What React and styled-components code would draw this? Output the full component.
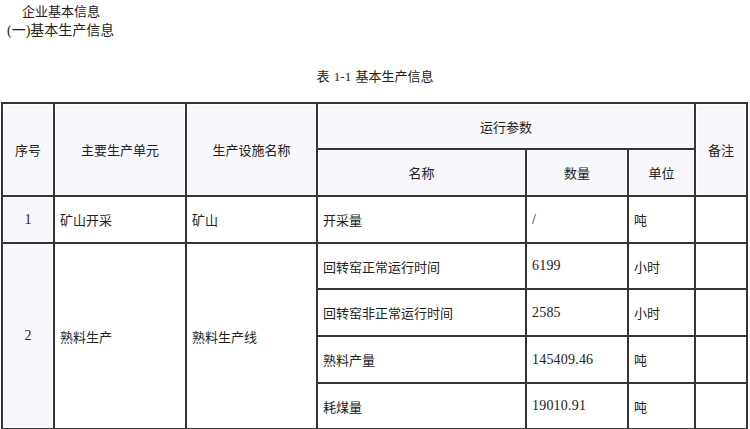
import React from "react";
import styled, { createGlobalStyle } from "styled-components";

const Global = createGlobalStyle`
  html, body { margin: 0; padding: 0; background: #fff; }
  body {
    font-family: "Liberation Serif", "Noto Sans CJK SC", serif;
    color: #222;
  }
`;

const Page = styled.div`
  width: 750px;
  height: 429px;
  overflow: hidden;
  display: flex;
  flex-direction: column;
`;

const SectionTitle = styled.div`
  padding-left: ${(p) => p.$indent}px;
  font-size: ${(p) => p.$size}px;
  line-height: ${(p) => p.$line}px;
  margin-top: ${(p) => p.$top}px;
`;

const Caption = styled.div`
  text-align: center;
  font-size: 13px;
  line-height: 16px;
  margin-top: 29px;
  word-spacing: 1px;
`;

const Table = styled.table`
  margin-top: 17px;
  margin-left: 1px;
  width: 745px;
  border-collapse: collapse;
  table-layout: fixed;
  font-size: 13px;
`;

const Cell = styled.td`
  border: 2px solid #353535;
  padding: 0 5px;
  height: ${(p) => p.$h || 46}px;
  box-sizing: border-box;
  text-align: ${(p) => (p.$center ? "center" : "left")};
  vertical-align: middle;
  background: ${(p) => (p.$tint ? "#f7f7fc" : "#fff")};
  box-shadow: inset 0 0 0 1px #fff;
  white-space: nowrap;
`;

const Head = styled(Cell).attrs({ as: "th" })`
  font-weight: normal;
  text-align: center;
  background: #f7f7fc;
`;

const Num = styled.span`
  font-size: 14px;
  letter-spacing: 0.2px;
`;

const widths = [52, 132, 131, 209, 102, 67, 52];

const rows2 = [
  ["回转窑正常运行时间", "6199", "小时"],
  ["回转窑非正常运行时间", "2585", "小时"],
  ["熟料产量", "145409.46", "吨"],
  ["耗煤量", "19010.91", "吨"],
];

export default function App() {
  return (
    <Page>
      <Global />
      <SectionTitle $indent={22} $size={13} $line={16} $top={4}>
        企业基本信息
      </SectionTitle>
      <SectionTitle $indent={7} $size={14} $line={18} $top={2}>
        (一)基本生产信息
      </SectionTitle>
      <Caption>表 1-1 基本生产信息</Caption>
      <Table>
        <colgroup>
          {widths.map((w, i) => (
            <col key={i} style={{ width: w }} />
          ))}
        </colgroup>
        <thead>
          <tr>
            <Head rowSpan={2} $h={46}>序号</Head>
            <Head rowSpan={2}>主要生产单元</Head>
            <Head rowSpan={2}>生产设施名称</Head>
            <Head colSpan={3} $h={46}>运行参数</Head>
            <Head rowSpan={2}>备注</Head>
          </tr>
          <tr>
            <Head $h={47}>名称</Head>
            <Head>数量</Head>
            <Head>单位</Head>
          </tr>
        </thead>
        <tbody>
          <tr>
            <Cell $center $tint $h={47}><Num>1</Num></Cell>
            <Cell>矿山开采</Cell>
            <Cell>矿山</Cell>
            <Cell>开采量</Cell>
            <Cell><Num>/</Num></Cell>
            <Cell>吨</Cell>
            <Cell />
          </tr>
          {rows2.map((r, i) => (
            <tr key={i}>
              {i === 0 && (
                <>
                  <Cell rowSpan={4} $center $tint><Num>2</Num></Cell>
                  <Cell rowSpan={4}>熟料生产</Cell>
                  <Cell rowSpan={4}>熟料生产线</Cell>
                </>
              )}
              <Cell $h={i === 1 || i === 2 ? 47 : 46}>{r[0]}</Cell>
              <Cell><Num>{r[1]}</Num></Cell>
              <Cell>{r[2]}</Cell>
              <Cell />
            </tr>
          ))}
        </tbody>
      </Table>
    </Page>
  );
}
